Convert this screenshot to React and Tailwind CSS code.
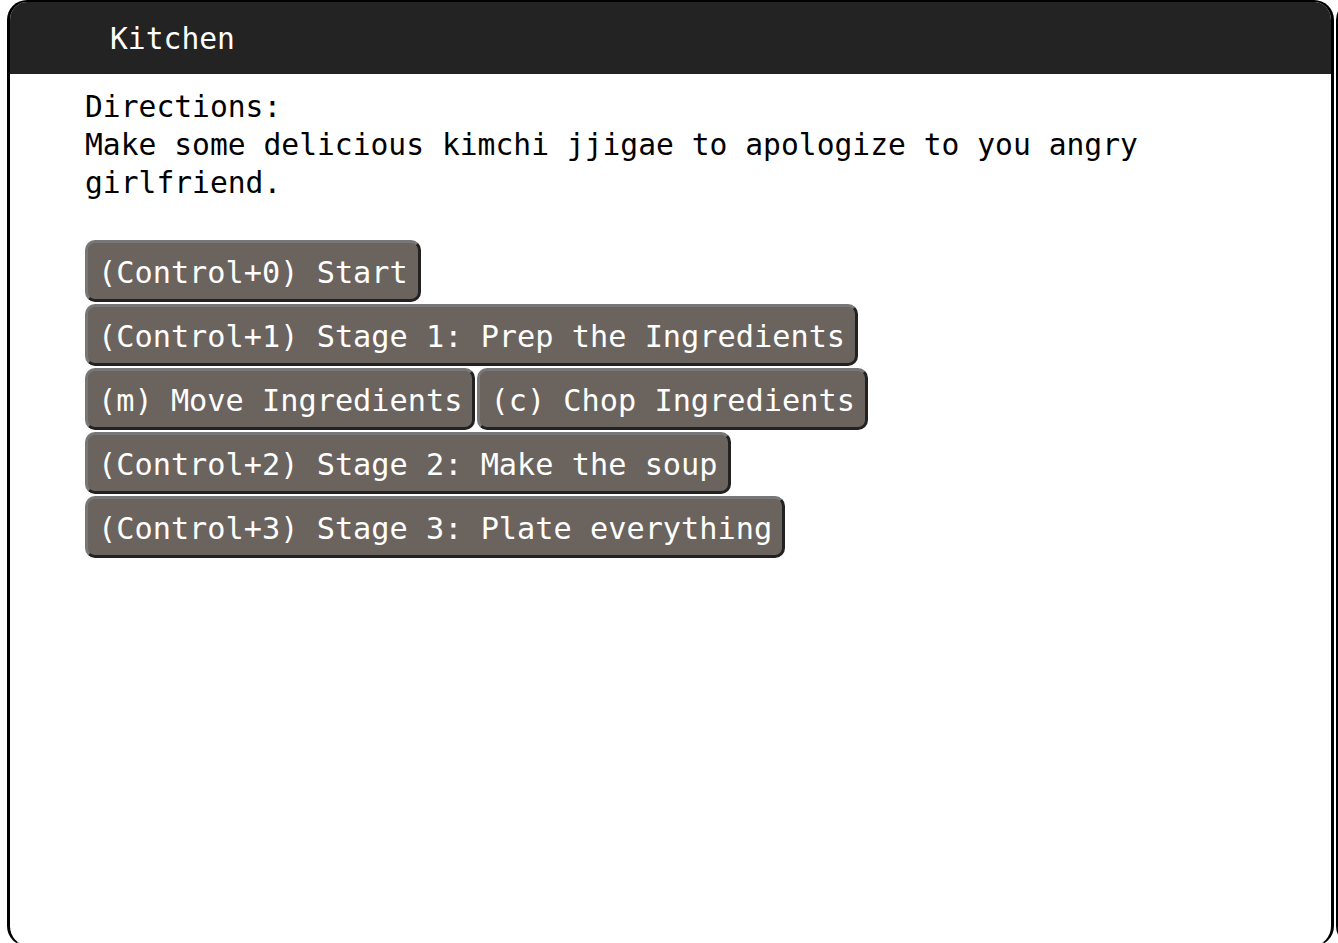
import React from 'react';

const actions = [
  ['(Control+0) Start'],
  ['(Control+1) Stage 1: Prep the Ingredients'],
  ['(m) Move Ingredients', '(c) Chop Ingredients'],
  ['(Control+2) Stage 2: Make the soup'],
  ['(Control+3) Stage 3: Plate everything'],
];

const mono = { fontFamily: '"DejaVu Sans Mono", "Liberation Mono", monospace' };

const KeyButton = ({ label }) => (
  <button
    className="rounded-[10px] border-[3px] border-t-[#777777] border-l-[#777777] border-b-[#222222] border-r-[#222222] bg-[#6b635e] px-[10px] pt-[11px] pb-[7px] text-left text-[30.27px] leading-[38px] whitespace-pre text-white"
    style={mono}
  >
    {label}
  </button>
);

export default function App() {
  return (
    <div className="flex h-[943px] gap-[2px] overflow-hidden bg-white pl-[7px]" style={mono}>
      <div className="flex h-[946px] w-[1327px] shrink-0 flex-col overflow-hidden rounded-[20px] border-[3px] border-t-[2px] border-black border-b-[#cccccc] border-b-[1px] bg-white">
        <div className="flex h-[72px] shrink-0 items-center bg-[#232323] pl-[100px] pt-[2px] text-[29.65px] text-white">
          Kitchen
        </div>
        <div className="pl-[75px] pt-[14px] text-[29.65px] leading-[38px] text-black">
          <div>Directions:</div>
          <div className="w-[1100px]">
            Make some delicious kimchi jjigae to apologize to you angry girlfriend.
          </div>
          <div className="mt-[38px] flex flex-col items-start gap-[2px]">
            {actions.map((row, i) => (
              <div key={i} className="flex gap-[2px]">
                {row.map((label) => (
                  <KeyButton key={label} label={label} />
                ))}
              </div>
            ))}
          </div>
        </div>
      </div>
      <div className="h-[946px] w-[40px] shrink-0 rounded-[20px] border-[3px] border-black"></div>
    </div>
  );
}
